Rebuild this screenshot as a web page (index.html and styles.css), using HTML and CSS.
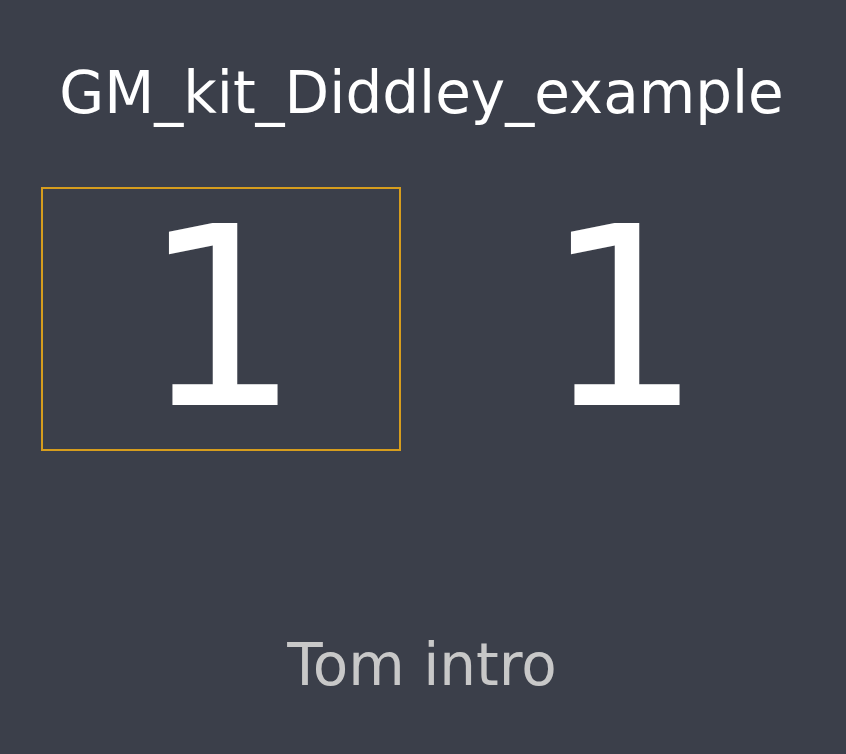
FILE: index.html
```html
<!DOCTYPE html>
<html>
<head>
	<title>GM_kit_Diddley_example</title>
	<link rel="stylesheet" href="styles.css">
</head>
<body>
	<div class="title">GM_kit_Diddley_example</div>
	<div class="counters">
		<div class="counter selected">1</div>
		<div class="counter">1</div>
	</div>
	<div class="section">Tom intro</div>
</body>
</html>
```

FILE: styles.css
```css
html {
	background-color: #3b3f4a;
}
body {
	margin: 0;
	padding-top: 59px;
	font-family: "DejaVu Sans", sans-serif;
	color: white;
}
.title {
	font-size: 58px;
	line-height: 68px;
	text-align: center;
	padding-right: 3px;
}
.counters {
	display: grid;
	grid-template-columns: 360px 360px;
	column-gap: 42px;
	padding-left: 41px;
	margin-top: 60px;
}
.counter {
	box-sizing: border-box;
	height: 264px;
	font-size: 250px;
	line-height: 260px;
	text-align: center;
	border: 2px solid #3b3f4a;
}
.counter.selected {
	border-color: #d69d1d;
}
.section {
	margin-top: 180px;
	font-size: 58px;
	line-height: 68px;
	text-align: center;
	color: #c8c8c8;
	padding-right: 2px;
}
```
